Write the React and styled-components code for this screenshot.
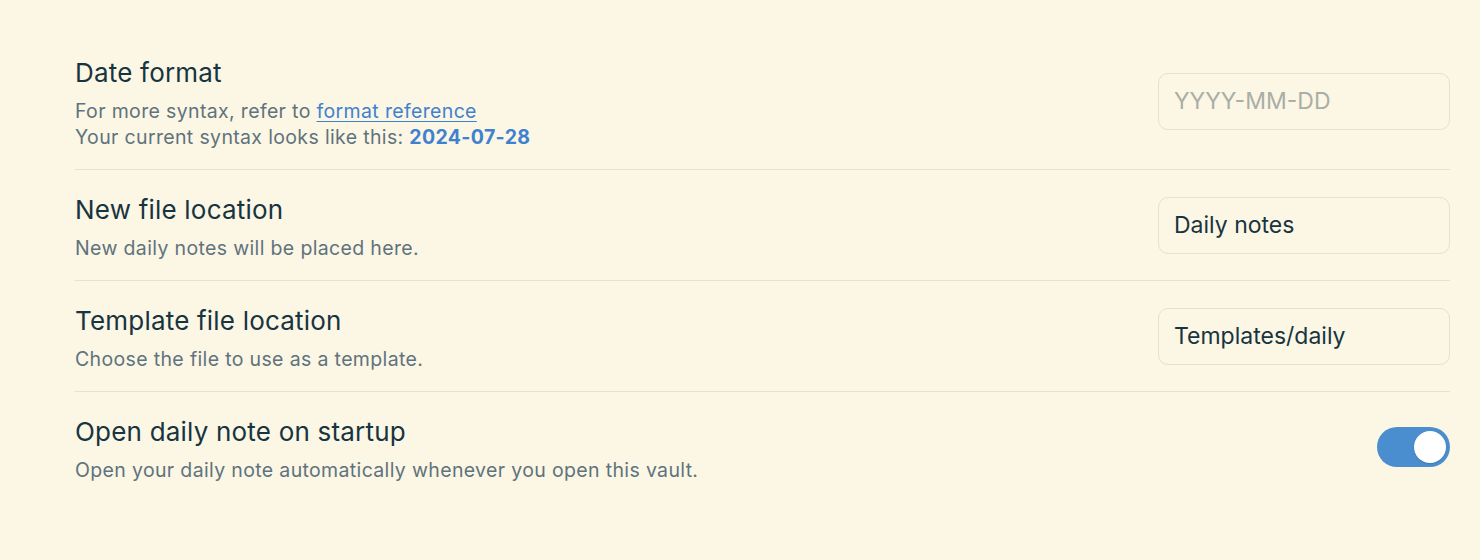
import React from 'react';
import styled, { createGlobalStyle } from 'styled-components';

const GlobalStyle = createGlobalStyle`
  html, body {
    margin: 0;
    padding: 0;
    background: #fcf6e4;
  }
  body {
    font-family: Inter, "Noto Sans", "Liberation Sans", sans-serif;
    -webkit-font-smoothing: antialiased;
  }
`;

const Page = styled.div`
  width: 1480px;
  height: 560px;
  box-sizing: border-box;
  padding: 33px 30px 0 75px;
  background: #fcf6e4;
`;

const SettingRow = styled.div`
  display: flex;
  align-items: center;
  justify-content: space-between;
  gap: 24px;
  padding: 21px 0;
  border-top: 1px solid #e8e1cd;

  &:first-child {
    border-top: none;
  }
`;

const Info = styled.div`
  display: flex;
  flex-direction: column;
  gap: 8px;
  padding-top: 2px;
  margin-bottom: -2px;
`;

const Name = styled.div`
  font-size: 26px;
  line-height: 34px;
  letter-spacing: 0.2px;
  color: #173441;
`;

const Description = styled.div`
  font-size: 19.5px;
  line-height: 26px;
  letter-spacing: 0.35px;
  color: #5e737d;
`;

const Link = styled.a`
  color: #3e82cf;
  text-decoration: underline;
  text-underline-offset: 3px;
`;

const Sample = styled.b`
  color: #3e82cf;
  font-weight: 700;
`;

const TextInput = styled.input`
  box-sizing: border-box;
  width: 292px;
  height: 57px;
  flex-shrink: 0;
  padding: 0 15px;
  border: 1px solid #e7e0ca;
  border-radius: 10px;
  background: transparent;
  font-family: inherit;
  font-size: 23px;
  color: #173441;
  outline: none;

  &::placeholder {
    color: #a9aea7;
  }
`;

const Toggle = styled.div`
  position: relative;
  width: 73px;
  height: 40px;
  flex-shrink: 0;
  border-radius: 20px;
  background: ${p => (p.$on ? '#4b8ecf' : '#d9d3c0')};

  &::after {
    content: "";
    position: absolute;
    top: 4px;
    left: ${p => (p.$on ? '37px' : '4px')};
    width: 32px;
    height: 32px;
    border-radius: 50%;
    background: #fff;
    box-shadow: 0 1px 2px rgba(0, 0, 0, 0.15);
  }
`;

export default function App() {
  return (
    <>
      <GlobalStyle />
      <Page>
        <SettingRow>
          <Info>
            <Name>Date format</Name>
            <Description>
              For more syntax, refer to <Link href="#">format reference</Link>
              <br />
              Your current syntax looks like this: <Sample>2024-07-28</Sample>
            </Description>
          </Info>
          <TextInput placeholder="YYYY-MM-DD" />
        </SettingRow>
        <SettingRow>
          <Info>
            <Name>New file location</Name>
            <Description>New daily notes will be placed here.</Description>
          </Info>
          <TextInput defaultValue="Daily notes" />
        </SettingRow>
        <SettingRow>
          <Info>
            <Name>Template file location</Name>
            <Description>Choose the file to use as a template.</Description>
          </Info>
          <TextInput defaultValue="Templates/daily" />
        </SettingRow>
        <SettingRow>
          <Info>
            <Name>Open daily note on startup</Name>
            <Description>Open your daily note automatically whenever you open this vault.</Description>
          </Info>
          <Toggle $on />
        </SettingRow>
      </Page>
    </>
  );
}
